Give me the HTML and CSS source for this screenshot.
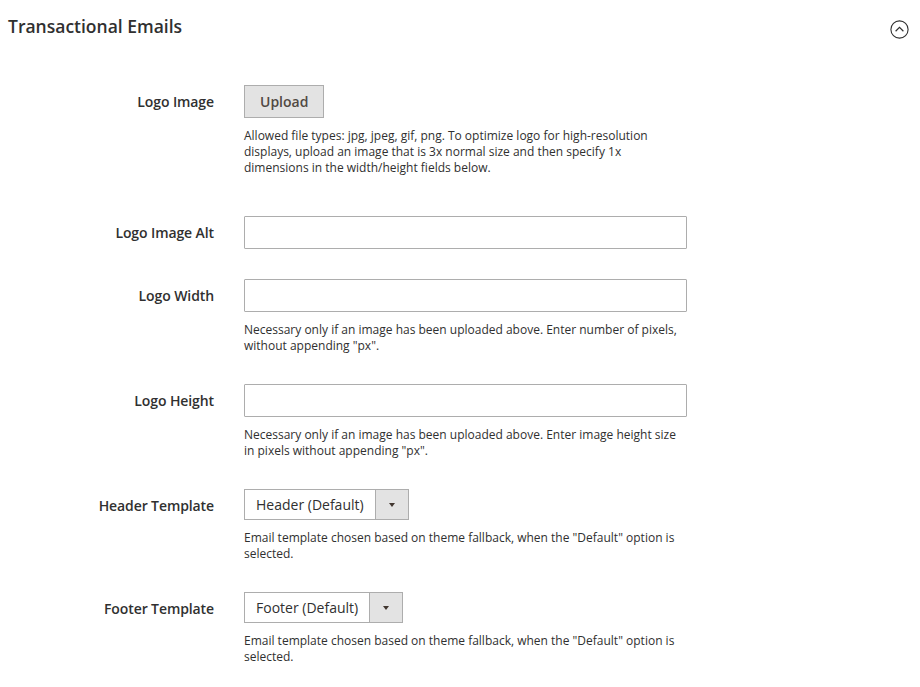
FILE: index.html
```html
<!DOCTYPE html>
<html>
<head>
<meta charset="utf-8">
<link rel="stylesheet" href="styles.css">
</head>
<body>
<section class="section">
  <div class="section-head">
    <h2 class="section-title">Transactional Emails</h2>
    <span class="collapse-icon">
      <svg width="19" height="19" viewBox="0 0 19 19">
        <circle cx="9.5" cy="9.5" r="8.6" fill="none" stroke="#303030" stroke-width="1.1"/>
        <path d="M5.6 11.2 L9.5 7.4 L13.4 11.2" fill="none" stroke="#303030" stroke-width="1.2"/>
      </svg>
    </span>
  </div>

  <div class="fields">
    <div class="field field-first">
      <label class="field-label">Logo Image</label>
      <div class="field-control">
        <button class="btn-upload">Upload</button>
        <p class="note">Allowed file types: jpg, jpeg, gif, png. To optimize logo for high-resolution displays, upload an image that is 3x normal size and then specify 1x dimensions in the width/height fields below.</p>
      </div>
    </div>

    <div class="field">
      <label class="field-label">Logo Image Alt</label>
      <div class="field-control">
        <input class="text-input" type="text">
      </div>
    </div>

    <div class="field">
      <label class="field-label">Logo Width</label>
      <div class="field-control">
        <input class="text-input" type="text">
        <p class="note">Necessary only if an image has been uploaded above. Enter number of pixels, without appending "px".</p>
      </div>
    </div>

    <div class="field">
      <label class="field-label">Logo Height</label>
      <div class="field-control">
        <input class="text-input" type="text">
        <p class="note">Necessary only if an image has been uploaded above. Enter image height size in pixels without appending "px".</p>
      </div>
    </div>

    <div class="field">
      <label class="field-label field-label-select">Header Template</label>
      <div class="field-control">
        <div class="select">
          <span class="select-value">Header (Default)</span>
          <span class="select-arrow"></span>
        </div>
        <p class="note">Email template chosen based on theme fallback, when the "Default" option is selected.</p>
      </div>
    </div>

    <div class="field">
      <label class="field-label field-label-select">Footer Template</label>
      <div class="field-control">
        <div class="select">
          <span class="select-value">Footer (Default)</span>
          <span class="select-arrow"></span>
        </div>
        <p class="note">Email template chosen based on theme fallback, when the "Default" option is selected.</p>
      </div>
    </div>
  </div>
</section>
</body>
</html>
```

FILE: styles.css
```css
* { box-sizing: border-box; }

body {
  margin: 0;
  background: #ffffff;
  font-family: "Open Sans", "Noto Sans", sans-serif;
  color: #303030;
}

.section {
  padding: 15px 10px 0 8px;
}

.section-head {
  display: flex;
  justify-content: space-between;
  align-items: flex-start;
}

.section-title {
  margin: 0;
  font-size: 17.5px;
  font-weight: 600;
  line-height: 22px;
  color: #303030;
}

.collapse-icon {
  display: block;
  margin-top: 5px;
  margin-right: 1px;
  width: 19px;
  height: 19px;
}
.collapse-icon svg { display: block; }

.fields {
  margin-top: 46px;
}

.field {
  display: grid;
  grid-template-columns: 206px 443px;
  column-gap: 30px;
  margin-bottom: 30px;
}

.field-first { margin-bottom: 40px; }

.field-label {
  text-align: right;
  font-size: 14px;
  font-weight: 600;
  line-height: 33px;
  letter-spacing: -0.1px;
  color: #303030;
}

.field-label-select { line-height: 33px; }

.field-control {
  display: flex;
  flex-direction: column;
  align-items: flex-start;
}

.btn-upload {
  height: 33px;
  padding: 0 15px;
  background: #e3e3e3;
  border: 1px solid #adadad;
  border-radius: 0;
  font-family: "Open Sans", "Noto Sans", sans-serif;
  font-size: 14px;
  font-weight: 600;
  color: #514943;
  line-height: 31px;
}

.text-input {
  display: block;
  width: 443px;
  height: 33px;
  margin: 0;
  border: 1px solid #adadad;
  border-radius: 1px;
  background: #fff;
  font-family: "Open Sans", "Noto Sans", sans-serif;
  font-size: 14px;
  padding: 0 10px;
}

.note {
  margin: 10px 0 0;
  font-size: 12px;
  line-height: 16px;
  color: #303030;
  width: 443px;
}

.select {
  display: flex;
  height: 31px;
  border: 1px solid #adadad;
  background: #fff;
}

.select-value {
  padding: 0 11px 0 11px;
  font-size: 14px;
  line-height: 30px;
  color: #303030;
}

.select-arrow {
  position: relative;
  width: 33px;
  background: #e3e3e3;
  border-left: 1px solid #adadad;
}

.select-arrow::after {
  content: "";
  position: absolute;
  left: 13px;
  top: 13px;
  border-left: 3.5px solid transparent;
  border-right: 3.5px solid transparent;
  border-top: 4px solid #41362f;
}
```
